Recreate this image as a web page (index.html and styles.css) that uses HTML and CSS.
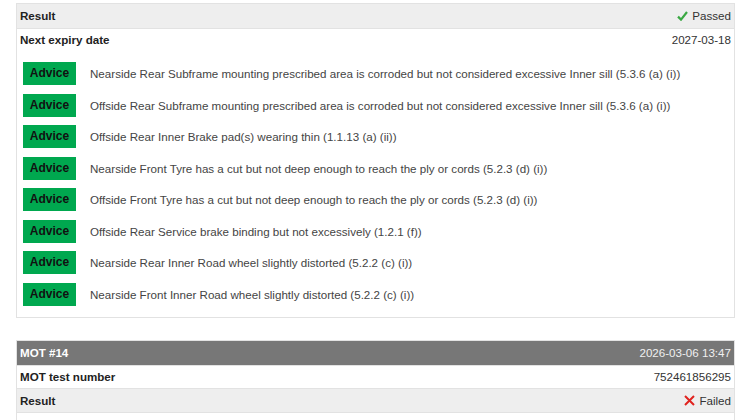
FILE: index.html
```html
<!DOCTYPE html>
<html lang="en">
<head>
    <meta charset="UTF-8">
    <title>MOT history</title>
    <link rel="stylesheet" href="styles.css">
</head>
<body>
    <div class="history">
        <!-- Latest test -->
        <div class="mot-card">
            <div class="row shade">
                <span class="label">Result</span>
                <span class="value">
                    <svg class="icon" width="11" height="10" viewBox="0 0 11 10"><path d="M1 5.6 L4 8.6 L10 1" fill="none" stroke="#3aa843" stroke-width="2.2"/></svg>Passed
                </span>
            </div>
            <div class="row">
                <span class="label">Next expiry date</span>
                <span class="value">2027-03-18</span>
            </div>
            <div class="advices">
                <div class="advice"><span class="badge">Advice</span><span class="text">Nearside Rear Subframe mounting prescribed area is corroded but not considered excessive Inner sill (5.3.6 (a) (i))</span></div>
                <div class="advice"><span class="badge">Advice</span><span class="text">Offside Rear Subframe mounting prescribed area is corroded but not considered excessive Inner sill (5.3.6 (a) (i))</span></div>
                <div class="advice"><span class="badge">Advice</span><span class="text">Offside Rear Inner Brake pad(s) wearing thin (1.1.13 (a) (ii))</span></div>
                <div class="advice"><span class="badge">Advice</span><span class="text">Nearside Front Tyre has a cut but not deep enough to reach the ply or cords (5.2.3 (d) (i))</span></div>
                <div class="advice"><span class="badge">Advice</span><span class="text">Offside Front Tyre has a cut but not deep enough to reach the ply or cords (5.2.3 (d) (i))</span></div>
                <div class="advice"><span class="badge">Advice</span><span class="text">Offside Rear Service brake binding but not excessively (1.2.1 (f))</span></div>
                <div class="advice"><span class="badge">Advice</span><span class="text">Nearside Rear Inner Road wheel slightly distorted (5.2.2 (c) (i))</span></div>
                <div class="advice"><span class="badge">Advice</span><span class="text">Nearside Front Inner Road wheel slightly distorted (5.2.2 (c) (i))</span></div>
            </div>
        </div>

        <!-- MOT #14 -->
        <div class="mot-card">
            <div class="row head">
                <span class="label">MOT #14</span>
                <span class="value">2026-03-06 13:47</span>
            </div>
            <div class="row">
                <span class="label">MOT test number</span>
                <span class="value">752461856295</span>
            </div>
            <div class="row shade">
                <span class="label">Result</span>
                <span class="value">
                    <svg class="icon" width="11" height="11" viewBox="0 0 11 11"><path d="M1 1 L10 10 M10 1 L1 10" fill="none" stroke="#e0231f" stroke-width="2"/></svg>Failed
                </span>
            </div>
            <div class="row"></div>
        </div>
    </div>
</body>
</html>
```

FILE: styles.css
```css
* {
    margin: 0;
    padding: 0;
    box-sizing: border-box;
}

body {
    font-family: 'Liberation Sans', Arial, sans-serif;
    font-size: 11.6px;
    color: #333;
    background: #fff;
}

.history {
    width: 719px;
    margin: 3px 0 0 16px;
    display: flex;
    flex-direction: column;
    gap: 22px;
}

.mot-card {
    border: 1px solid #e2e2e2;
}

.row {
    display: flex;
    justify-content: space-between;
    align-items: center;
    height: 23.5px;
    padding: 0 3px;
    border-top: 1px solid #e2e2e2;
}

.row:first-child {
    border-top: none;
}

.row.shade {
    background: #eeeeee;
}

.row.head {
    background: #777777;
    color: #f0f0f0;
}

.label {
    font-weight: bold;
    color: #222;
}

.row.head .label {
    color: #fff;
}

.value {
    display: flex;
    align-items: center;
    gap: 4px;
}

/* Advisory list */
.advices {
    padding: 11px 8px 11.5px 6px;
    display: flex;
    flex-direction: column;
    gap: 8.5px;
}

.advice {
    display: flex;
    align-items: center;
    gap: 14px;
}

.badge {
    display: inline-block;
    width: 53px;
    height: 23px;
    line-height: 23px;
    text-align: center;
    background: #00a84f;
    color: #111;
    font-weight: bold;
    font-size: 12px;
}

.advice .text {
    color: #444;
}
```
